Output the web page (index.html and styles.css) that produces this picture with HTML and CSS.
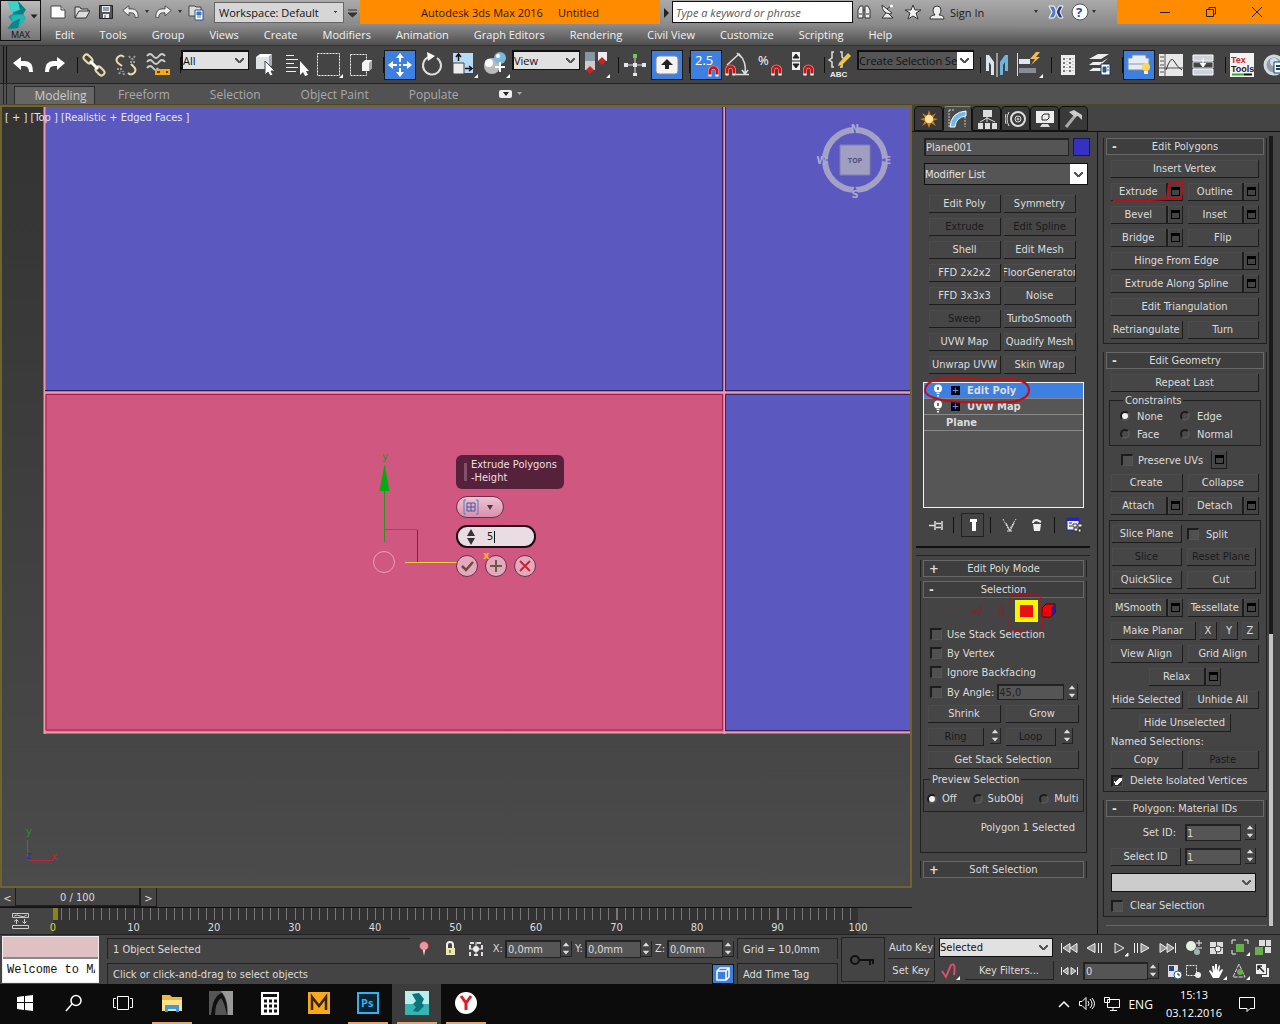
FILE: index.html
```html
<!DOCTYPE html>
<html lang="en">

<head>
    <meta charset="UTF-8">
    <meta name="viewport" content="width=device-width, initial-scale=1.0">
    <title>Autodesk 3ds Max 2016 - Untitled</title>
    <link rel="stylesheet" href="styles.css">
</head>

<body>
    <!-- shared icons -->
    <svg class="defs" width="0" height="0">
        <symbol id="spin" viewBox="0 0 9 14"><path d="M4.5 1.5 7.5 5h-6zM4.5 12.5 7.5 9h-6z" fill="#ddd"/></symbol>
        <symbol id="magnet" viewBox="0 0 11 12"><path d="M2 11V6a3.5 3.5 0 0 1 7 0v5" fill="none" stroke="#e88" stroke-width="4"/><path d="M2 11V6a3.5 3.5 0 0 1 7 0v5" fill="none" stroke="#c11" stroke-width="2.5"/><path d="M.5 9.5h3v2h-3zM7.5 9.5h3v2h-3z" fill="#fff"/></symbol>
        <symbol id="undo" viewBox="0 0 22 18"><path d="M1 7 9 1v4h4q8 0 8 11h-4q0-6-5-6H9v4z"/></symbol>
        <symbol id="bulb" viewBox="0 0 10 13"><circle cx="5" cy="4.5" r="4" fill="#fff"/><path d="M3.5 9h3v1h-3zM4 11h2v1.5H4z" fill="#fff"/><path d="M4 3h2v3H4z" fill="#777"/></symbol>
    </svg>

    <header class="top">
        <button class="logo">
            <svg width="34" height="30" viewBox="0 0 34 30"><path d="M3 1 14 0l8 9-3 4 3 5-8 10-11 1 5-7-4-6 5-3z" fill="#139a9c"/><path d="M3 1 14 0l2 9-9 3z" fill="#3fd0cc"/><path d="M14 0l8 9-3 5-10-1 7-4z" fill="#0b7f86"/><path d="m7 15 12-1 3 4-8 10-6-5z" fill="#25b5b3"/><path d="m8 22 8-4-2 10-11 1z" fill="#0c868c"/><path d="M27 14h7l-3.500 4z" fill="#222"/></svg>
            <span>MAX</span>
        </button>
        <div class="bars">
            <div class="titlebar">
                <div class="quick">
                    <svg width="16" height="16"><path d="M1 2h10l4 4v8H1z" fill="#fff" stroke="#444"/><path d="M11 2v4h4" fill="#ccc" stroke="#444"/></svg>
                    <svg width="16" height="16"><path d="M1 14V3h5l1 2h7v2M1 14 5 7h11l-4 7z" fill="#ddd" stroke="#333"/></svg>
                    <svg width="16" height="16"><path d="M1.500 1.500h13v13h-13z" fill="#555" stroke="#222"/><path d="M4 2h8v6H4zM5 10h6v4H5z" fill="#e6edf5"/><path d="M5 4h6M5 6h6M7 11v3" stroke="#456"/></svg>
                    <svg class="pale" width="17" height="14"><use href="#undo"/></svg>
                    <i class="dot"></i>
                    <svg class="pale flip" width="17" height="14"><use href="#undo"/></svg>
                    <i class="dot"></i>
                    <svg width="17" height="17"><path d="M1 2h6l1 1h5v9H1z" fill="#ddd" stroke="#444"/><path d="M7 6h8v10H7z" fill="#fff" stroke="#27558f"/><path d="M9 8h4v3H9zM9 13h4" fill="#3877bd" stroke="#3877bd"/></svg>
                    <select class="workspace" aria-label="Workspace"><option>Workspace: Default</option></select>
                    <svg class="more" width="16" height="22"><path d="M4 9h9M4 12h9l-4.500 4z" stroke="#333" fill="#333"/></svg>
                </div>
                <div class="caption"><span>Autodesk 3ds Max 2016</span><span>Untitled</span></div>
                <div class="search">
                    <svg width="12" height="22"><path d="m4 7 5 5-5 5z" fill="#222"/></svg>
                    <input type="text" placeholder="Type a keyword or phrase" aria-label="Search">
                    <svg width="24" height="20"><path d="M5 16V8l2-4h3v12zM12 16V4h3l2 4v8zM10 8h2" fill="#eee" stroke="#333"/><path d="M6 12h3M13 12h3" stroke="#333"/></svg>
                    <svg width="24" height="20"><path d="M5 3q0 8 8 9l2-1zM9 11l-4 5h11l-4-4" fill="#eee" stroke="#333"/><path d="m10 7 4-3" stroke="#333"/><circle cx="14.500" cy="4" r="1.500" fill="#fff"/></svg>
                    <svg width="24" height="20"><path d="m12 3 2 5h6l-5 3 2 6-5-3-5 3 2-6-5-3h6z" fill="#f3f3f3" stroke="#333"/></svg>
                    <svg width="24" height="20"><path d="M5 17q0-4 5-4-2-2-2-5 0-4 4-4t4 4q0 3-2 5 5 0 5 4z" fill="#eee" stroke="#333"/></svg>
                    <a class="signin" href="#">Sign In</a>
                    <i class="dot"></i>
                    <svg class="exch" width="20" height="20"><path d="M3 4h5l2 4v4l-2 4H3l3-6z" fill="#5a7bc4" stroke="#fff"/><path d="M17 4h-4l-3 6 3 6h4l-3-6z" fill="#203c85" stroke="#fff"/></svg>
                    <svg width="26" height="20"><circle cx="14" cy="10" r="8" fill="#fff" stroke="#555"/><text x="10" y="15" class="help">?</text></svg>
                    <i class="dot"></i>
                </div>
                <div class="winbtns">
                    <button aria-label="Minimize"><svg width="12" height="12"><path d="M1 6.500h10" stroke="#222"/></svg></button>
                    <button aria-label="Restore"><svg width="12" height="12"><path d="M1.500 3.500h7v7h-7zM4 3V1.500h6.500V8H9" fill="none" stroke="#222"/></svg></button>
                    <button aria-label="Close"><svg width="12" height="12"><path d="m1 1 10 10M11 1 1 11" stroke="#222"/></svg></button>
                </div>
            </div>
            <nav class="menubar">
                <a href="#">Edit</a><a href="#">Tools</a><a href="#">Group</a><a href="#">Views</a><a href="#">Create</a><a href="#">Modifiers</a><a href="#">Animation</a><a href="#">Graph Editors</a><a href="#">Rendering</a><a href="#">Civil View</a><a href="#">Customize</a><a href="#">Scripting</a><a href="#">Help</a>
            </nav>
        </div>
    </header>

    <div class="toolbar">
        <button aria-label="Undo"><svg width="22" height="18" fill="#fff"><use href="#undo"/></svg></button>
        <button aria-label="Redo"><svg class="flip" width="22" height="18" fill="#fff"><use href="#undo"/></svg></button>
        <i class="sep"></i>
        <button aria-label="Link"><svg width="24" height="24" fill="none" stroke="#e8dcae" stroke-width="2"><rect x="1" y="3" width="10" height="6" rx="3" transform="rotate(45 6 6)"/><rect x="13" y="15" width="10" height="6" rx="3" transform="rotate(45 18 18)"/><path d="m8 8 8 8" stroke="#fff" stroke-width="3"/></svg></button>
        <button aria-label="Unlink"><svg width="24" height="24" fill="none" stroke="#e8dcae" stroke-width="2"><path d="M10 4Q7 1 4 4t0 6l4 3M14 20q3 3 6 0t0-6l-3-3"/><path d="m15 3 2 3M21 3l-3 4M16 9h6M3 16h5M5 21l2-3M10 22l-1-4" stroke="#999" stroke-dasharray="2 1"/></svg></button>
        <button aria-label="Bind"><svg width="26" height="26" fill="none"><path d="M2 4q3-4 6 0t6 0 6 0M2 10q3-4 6 0t6 0 6 0M2 16q3-4 6 0t5 0" stroke="#ccc" stroke-width="2"/><path d="M11 18h6v4h-6zM18 18h6v4h-6zM15 20h6" stroke="#f2ab16" stroke-width="2"/></svg></button>
        <i class="sep"></i>
        <select class="filter" aria-label="Selection filter"><option>All</option></select>
        <button aria-label="Select"><svg width="22" height="24"><path d="m2 4 4-3h12l-3 3z" fill="#fff"/><path d="M2 4h13v12H2z" fill="#dfe3e6"/><path d="m18 1-3 3v12l3-4z" fill="#aab"/><path d="M11 8v14l3-3 2 4 3-1-2-4h4z" fill="#fff" stroke="#444" stroke-width="1"/></svg></button>
        <button aria-label="Select by Name"><svg width="26" height="24"><path d="M2 2.500h8M2 6.500h12M2 10.500h8M2 14.500h12M2 18.500h10" stroke="#eee"/><path d="M16 8v14l3-3 2 4 3-1-2-4h3z" fill="#fff"/></svg></button>
        <button aria-label="Region"><svg width="28" height="28"><path d="M2.500 2.500h22v22h-22z" fill="none" stroke="#fff" stroke-dasharray="2 1"/><path d="m28 23v4h-4z" fill="#fff"/></svg></button>
        <button aria-label="Window crossing"><svg width="26" height="26"><path d="M2.500 2.500h16v21h-16z" fill="none" stroke="#fff" stroke-dasharray="2 1"/><path d="m14 11 3-3h7v8l-3 3h-7z" fill="#f4f4f4"/><path d="M21 11v8l3-3V8z" fill="#aaa"/></svg></button>
        <i class="sep"></i>
        <button class="on" aria-label="Move"><svg width="24" height="24" fill="#fff"><path d="m12 0 4 5h-3v4h-2V5H8zM12 24l4-5h-3v-4h-2v4H8zM0 12l5-4v3h4v2H5v3zM24 12l-5-4v3h-4v2h4v3z"/><path d="M11 11h2v2h-2z"/></svg></button>
        <button aria-label="Rotate"><svg width="24" height="26"><path d="M9 5a9 9 0 1 0 8 1" fill="none" stroke="#ddd" stroke-width="2"/><path d="m7 0 8 4-7 5z" fill="#fff"/></svg></button>
        <button aria-label="Scale"><svg width="28" height="28"><path d="M3 2h20v20H3z" fill="#b5dcf4"/><path d="M3 12h11v11H3z" fill="#eee" stroke="#444"/><path d="M8.500 10V4M6 6l2.500-3L11 6M15 17.500h7M19 15l3 2.500-3 2.500" fill="none" stroke="#111" stroke-width="1.500"/><path d="M28 23v4h-4z" fill="#fff"/></svg></button>
        <button aria-label="Place"><svg width="28" height="28"><circle cx="10" cy="15" r="8" fill="#bbb"/><circle cx="7" cy="12" r="4" fill="#fff"/><circle cx="18" cy="7" r="6" fill="#7db8dc"/><circle cx="16" cy="5" r="2" fill="#fff"/><path d="M18 11v10M13 16h10" stroke="#fff" stroke-width="2"/><path d="M28 23v4h-4z" fill="#fff"/></svg></button>
        <select class="filter" aria-label="Reference coordinate system"><option>View</option></select>
        <button aria-label="Pivot"><svg width="28" height="28"><path d="M3 1h10v18H3z" fill="#8797a2"/><path d="M3 10h10v9H3z" fill="#ccc"/><path d="M16 1h9v9h-9z" fill="#eee"/><path d="m8 15 4 4-4 4-4-4zM20 6l4 4-4 4-4-4z" fill="#c22"/><path d="M28 23v4h-4z" fill="#fff"/></svg></button>
        <i class="sep"></i>
        <button aria-label="Manipulate"><svg width="24" height="24"><path d="M12 2v20M2 12h20" stroke="#ddd"/><path d="M10 20h4v3h-4zM1 10h4v4H1zM19 10h4v4h-4zM10 10h4v4h-4z" fill="#dde8f0"/><path d="M10 1h4v4h-4z" fill="#6c5"/></svg></button>
        <button class="on" aria-label="Keyboard override"><svg width="24" height="20"><rect x="1" y="1" width="22" height="18" rx="3" fill="#f3f3f3" stroke="#888"/><path d="m12 4 6 6h-4v4h-4v-4H6z" fill="#222"/></svg></button>
        <i class="sep"></i>
        <button class="on" aria-label="Snaps"><svg width="28" height="28"><text x="3" y="14" class="snap">2.5</text><use href="#magnet" x="16" y="14" width="11" height="12"/></svg></button>
        <button aria-label="Angle Snap"><svg width="28" height="28"><path d="M3 14 15 3q8 8 6 20M12 23.500h13M18 19l3 4 3-4M13 2l4 4" fill="none" stroke="#ddd" stroke-width="1.500"/><use href="#magnet" x="1" y="13" width="11" height="12"/></svg></button>
        <button aria-label="Percent Snap"><svg width="28" height="28"><text x="2" y="14" class="snap">%</text><use href="#magnet" x="15" y="13" width="11" height="12"/></svg></button>
        <button aria-label="Spinner Snap"><svg width="28" height="28"><path d="M4 1h8v18H4z" fill="#eee"/><path d="m8 3 3 4H5zM8 17l3-4H5zM4 10h8" fill="#222" stroke="#222"/><use href="#magnet" x="15" y="13" width="11" height="12"/></svg></button>
        <i class="sep"></i>
        <button aria-label="Edit Named Selection Sets"><svg width="28" height="28"><path d="M7 1H5v6l-3 2 3 2v5h2M13 1h2v5l2 2M13 16h2v-3" fill="none" stroke="#ddd" stroke-width="1.500"/><path d="m12 12 9-10 3 3-9 9-4 1z" fill="#f4c73c"/><text x="3" y="26" class="abc">ABC</text></svg></button>
        <select class="sets" aria-label="Named selection sets"><option>Create Selection Se</option></select>
        <i class="sep"></i>
        <button aria-label="Mirror"><svg width="26" height="26"><path d="M2 3h3l5 7v13H7V13l-2-3v9H2z" fill="#dde5ea"/><path d="M24 3h-3l-5 7v13h3V13l2-3v9h3z" fill="#6db3df"/><path d="M13 1v24" stroke="#eee"/></svg></button>
        <button aria-label="Align"><svg width="28" height="28"><path d="M2.500 2v23" stroke="#ddd"/><path d="M4 8h11v5H4z" fill="#dce7f2"/><path d="M4 17h17v5H4z" fill="#888c98"/><path d="m21 1-6 7h5l-4 6 9-8h-4l4-5z" fill="#f4bb50"/><path d="M28 23v4h-4z" fill="#fff"/></svg></button>
        <i class="sep"></i>
        <button aria-label="Scene Explorer"><svg width="18" height="24"><path d="M2 2h14v20H2z" fill="#eee"/><path d="M5 5v15M11 5v15" stroke="#777" stroke-width="2" stroke-dasharray="2 2"/><path d="M8 5v15M14 5v15" stroke="#999" stroke-dasharray="1 2"/></svg></button>
        <button aria-label="Layer Explorer"><svg width="26" height="26"><path d="m2 7 9-5h11l-8 5zM2 13l4-3h9l6-4-7 7zM2 19l4-3h9l6-4-7 7z" fill="#eee"/><path d="M14 12h9v11h-9z" fill="#fff" stroke="#16355c"/><path d="M16 15h3v5h-3zM20 15h2M20 18h2" fill="#23578c" stroke="#23578c"/></svg></button>
        <i class="sep"></i>
        <button class="on" aria-label="Toggle Ribbon"><svg width="26" height="26"><path d="M2 6h4V3h14v3h3v12H2z" fill="#e4ebf5" stroke="#888"/><path d="M2 12h21" stroke="#89a"/><circle cx="20" cy="15" r="4" fill="#ffd65a"/><path d="M18 19h4v3h-4z" fill="#eee"/></svg></button>
        <button aria-label="Curve Editor"><svg width="26" height="26"><path d="M1 2h24v22H1z" fill="#e8e8e8"/><path d="M7 2v22M1 16h24M2 5h4M2 9h4M2 13h4M2 20h4" stroke="#555"/><path d="M8 18q5-15 8-9t8 9" fill="none" stroke="#333"/></svg></button>
        <button aria-label="Schematic View"><svg width="24" height="26"><path d="M2 3h20v6H2zM2 17h20v6H2z" fill="#ccd3db" stroke="#fff"/><path d="M2 10h20v6H2z" fill="#444" stroke="#ddd"/><path d="M12 6v8M9 11l3 4 3-4" fill="#fff" stroke="#fff"/></svg></button>
        <i class="sep"></i>
        <button aria-label="TexTools"><svg width="26" height="26"><path d="M1 1h24v24H1z" fill="#f3f3f3"/><text x="2" y="11" class="tex red">Tex</text><text x="2" y="20" class="tex">Tools</text><path d="M3 22.500h12" stroke="#3a3" stroke-width="2"/><path d="M15 22.500h8" stroke="#111" stroke-width="2"/></svg></button>
        <button aria-label="Render Setup"><svg width="26" height="26"><circle cx="13" cy="13" r="9" fill="#99a" stroke="#cdd" stroke-width="3"/><circle cx="13" cy="10" r="4" fill="#cde"/><path d="M13 10h12v11H13z" fill="#fff" stroke="#146"/><path d="M15 14h8M15 17h8" stroke="#146" stroke-width="2"/></svg></button>
    </div>

    <div class="ribbon">
        <button class="current">Modeling</button><button>Freeform</button><button>Selection</button><button>Object Paint</button><button>Populate</button>
        <svg width="24" height="12"><rect x="0" y="2" width="13" height="8" rx="2" fill="#eee"/><path d="M4 4h6L7 8z" fill="#222"/><path d="M18 4h5l-2.500 3z" fill="#aaa"/></svg>
    </div>

    <main class="work">
        <div class="left">
            <div class="viewport">
                <svg class="scene" viewBox="1 1 908 780" preserveAspectRatio="xMinYMin slice">
                    <path d="M43 0h900v627H43z" fill="#5b58bf"/>
                    <path d="M43 287h680v340H43z" fill="#d0577f"/>
                    <path d="M43 286.500h900M723.500 0v628M43 626.500h900M43.500 0v628" stroke="#ee9aae" stroke-width="2" fill="none"/>
                    <path d="M44 284.500h678M724 284.500h200" stroke="#222060"/>
                    <path d="M721.500 0v284M724.500 0v284M724.500 289v335M724 288.500h200M724 624.500h200" stroke="#33266c" fill="none"/>
                    <path d="M45 288.500h676.500v335.500H45z" fill="none" stroke="#a02050"/>
                    <g fill="none">
                        <path d="M383.500 436v-54M383.500 423.500h33" stroke="#2f8f22"/>
                        <path d="M416.500 424v33" stroke="#d00020"/>
                        <path d="M404 456.500h70" stroke="#ffd23a"/>
                        <circle cx="383" cy="456" r="10.500" stroke="#e7a3b8"/>
                    </g>
                    <path d="m383.500 358 5 27h-10z" fill="#00ac12"/>
                    <text x="381" y="354" class="axis green">y</text>
                    <path d="M26.500 754v-20" stroke="#3b7a3e"/>
                    <path d="M28 754.500h24" stroke="#b52a35"/>
                    <text x="25" y="729" class="axis green">y</text>
                    <text x="25" y="753" class="axis blue">z</text>
                    <text x="50" y="754" class="axis red">x</text>
                </svg>
                <div class="vlabel">[ + ] [Top ] [Realistic + Edged Faces ]</div>
                <svg class="cube" width="80" height="80" viewBox="0 0 80 80">
                    <circle cx="40" cy="40" r="30" fill="none" stroke="#a3a2c6" stroke-width="6"/>
                    <path d="M37 7h6l-3 7zM37 73h6l-3-7zM7 37v6l7-3zM73 37v6l-7-3z" fill="#5b58bf"/>
                    <path d="M25 25h30v30H25z" fill="#a09fc2" stroke="#8280b4"/>
                    <text x="40" y="43" class="top-face">TOP</text>
                    <text x="40" y="12">N</text><text x="40" y="78">S</text><text x="7" y="44">W</text><text x="73" y="44">E</text>
                </svg>
                <div class="caddy">
                    <div class="caddy-title"><i></i><span>Extrude Polygons<br>-Height</span></div>
                    <button class="pill"><svg width="36" height="16"><path d="M3 1H1v14h2M13 1h2v14h-2" fill="none" stroke="#5577cc"/><path d="M4 4h8v8H4zM8 4v8M4 8h8" fill="none" stroke="#4557a8"/><path d="M24 6h6l-3 5z" fill="#553344"/></svg></button>
                    <div class="field"><svg width="10" height="16"><path d="m5 0 4 7H1zM5 16l4-7H1z" fill="#333"/></svg><input type="text" value="5" aria-label="Height"><i class="caret"></i></div>
                    <div class="rounds">
                        <button aria-label="OK"><svg width="16" height="16"><path d="m3 8 4 4 7-8" fill="none" stroke="#6a4b38" stroke-width="2.500"/></svg></button>
                        <button aria-label="Apply"><svg width="16" height="16"><path d="M8 2v12M2 8h12" stroke="#6a5a4a" stroke-width="2"/></svg></button>
                        <button aria-label="Cancel"><svg width="16" height="16"><path d="m3 3 10 10M13 3 3 13" stroke="#cc2238" stroke-width="2"/></svg></button>
                        <b>x</b>
                    </div>
                </div>
            </div>
            <div class="slider"><button>&lt;</button><button class="handle">0 / 100</button><button>&gt;</button></div>
            <div class="track">
                <svg width="18" height="18" fill="none" stroke="#ccc"><path d="M.5 1.500h16v4H.5zM.5 13.500h16v3H.5zM2 4q3-2 6 0t7-1M4.500 12V7.500L2 9.500M4.500 7.500l2 2M12.500 7v4.500l-2-2M12.500 11.500l2-2"/></svg>
                <div class="ruler">
                    <div class="ticks"></div>
                    <div class="nums"><span>0</span><span>10</span><span>20</span><span>30</span><span>40</span><span>50</span><span>60</span><span>70</span><span>80</span><span>90</span><span>100</span></div>
                </div>
            </div>
        </div>

        <aside class="side">
            <div class="tabs">
                <button aria-label="Create"><svg width="20" height="20"><path d="m10 1 2 6 5-3-3 5 5 1-5 2 3 5-5-3-2 5-2-5-5 3 3-5-5-2 5-1-3-5 5 3z" fill="#c98224"/><circle cx="10" cy="10" r="4" fill="#ffe29a"/></svg></button>
                <button class="current" aria-label="Modify"><svg width="20" height="20"><path d="M2 18Q3 3 18 2v5Q8 8 7 18z" fill="#6fb9ec" stroke="#fff"/><path d="M1 1v18M1 1h5M17 8v10" stroke="#ccc" stroke-dasharray="2 1"/></svg></button>
                <button aria-label="Hierarchy"><svg width="20" height="20" fill="#ddd"><path d="M6 1h9v7H6zM9.500 8h1v5h-1zM1 14h5v6H1zM8 14h5v6H8zM15 14h5v6h-5z"/><path d="m3 13 7-4 8 4" fill="none" stroke="#ddd"/></svg></button>
                <button aria-label="Motion"><svg width="22" height="20" fill="none" stroke="#ddd"><circle cx="13" cy="10" r="7" stroke-width="2"/><circle cx="13" cy="10" r="3"/><circle cx="13" cy="10" r="1"/><path d="M4 3q-4 7 0 14M1 5q-2 5 0 10"/></svg></button>
                <button aria-label="Display"><svg width="20" height="20"><path d="M1 2h18v12H1z" fill="#eee"/><path d="M7 7l2-2h5v4l-2 2H7z" fill="none" stroke="#222"/><path d="M7 15h6l2 3H5z" fill="#ddd"/></svg></button>
                <button aria-label="Utilities"><svg width="20" height="20"><path d="m2 18 9-11" stroke="#aaa" stroke-width="3"/><path d="m5 3 5-2 8 5v5l-4-4-3 1z" fill="#ccc"/></svg></button>
            </div>
            <div class="cols">
                <div class="modify">
                    <div class="namerow"><input type="text" value="Plane001" aria-label="Object name"><button class="swatch" aria-label="Object colour"></button></div>
                    <select class="modlist" aria-label="Modifier List"><option>Modifier List</option></select>
                    <div class="modbtns">
                        <button>Edit Poly</button><button>Symmetry</button>
                        <button disabled>Extrude</button><button disabled>Edit Spline</button>
                        <button>Shell</button><button>Edit Mesh</button>
                        <button>FFD 2x2x2</button><button>FloorGenerator</button>
                        <button>FFD 3x3x3</button><button>Noise</button>
                        <button disabled>Sweep</button><button>TurboSmooth</button>
                        <button>UVW Map</button><button>Quadify Mesh</button>
                        <button>Unwrap UVW</button><button>Skin Wrap</button>
                    </div>
                    <ul class="stack">
                        <li class="active"><svg width="10" height="13"><use href="#bulb"/></svg><i>+</i>Edit Poly</li>
                        <li><svg width="10" height="13"><use href="#bulb"/></svg><i>+</i>UVW Map</li>
                        <li class="base">Plane</li>
                    </ul>
                    <svg class="mark-stack" width="112" height="32" viewBox="0 0 112 32"><path d="M14 6Q30 1 60 6l30-1q17 2 17 11 0 9-17 12-35 2-65-1Q2 23 3 16 4 8 14 6z" fill="none" stroke="#c00d18" stroke-width="2"/></svg>
                    <div class="stacktools">
                        <button aria-label="Pin stack"><svg width="16" height="14"><path d="M1 7.500h6M7 3v9M8 5.500h5M8 9.500h5M14 3v9" stroke="#ddd" stroke-width="1.500"/></svg></button>
                        <i class="sep"></i>
                        <button class="pressed" aria-label="Show end result"><svg width="10" height="14"><path d="M2 1h7v3H8v9H4V4H2z" fill="#fff"/></svg></button>
                        <i class="sep"></i>
                        <button aria-label="Make unique"><svg width="16" height="16" fill="none" stroke="#ddd"><path d="m1 2 6 11L14 2" stroke-dasharray="2 1"/><path d="m4 6 4 8 4-8M5 14h5"/></svg></button>
                        <button aria-label="Remove modifier"><svg width="12" height="14"><path d="M2 6h8l-1 7H3z" fill="#eee"/><path d="M2 5q0-3 4-3l4 2" stroke="#eee" fill="none" stroke-width="2"/></svg></button>
                        <i class="sep"></i>
                        <button aria-label="Configure sets"><svg width="16" height="16"><path d="M1 1h12v12H1z" fill="#eee" stroke="#22c"/><path d="M1 1h12v3H1z" fill="#22c"/><path d="M3 6h3M3 9h3" stroke="#333"/><path d="M7 7h4v3H7zM12 7h4v3h-4zM8 11h4v3H8zM12 12h3v3h-3z" fill="#fff" stroke="#333" stroke-width="1"/></svg></button>
                    </div>
                    <div class="rolls">
                        <section class="roll closed"><button class="rt"><b>+</b>Edit Poly Mode</button></section>
                        <section class="roll sel">
                            <button class="rt"><b>-</b>Selection</button>
                            <div class="rb">
                                <div class="sub">
                                    <svg width="20" height="20"><path d="m3 6 5 8 6-7" fill="none" stroke="#8c2029" stroke-dasharray="2 3"/></svg>
                                    <svg width="20" height="20"><path d="m3 12 12-7-3 10-3-4-4 2" fill="none" stroke="#8c2029"/></svg>
                                    <svg width="20" height="20"><path d="m5 4 4 3v6l-4 3M10 4q4 4 1 12" fill="none" stroke="#8c2029"/></svg>
                                    <button aria-label="Polygon"></button>
                                    <svg width="18" height="20"><path d="m2 7 4-4h9v9l-4 4H2z" fill="#f00" stroke="#400"/><path d="m11 7 4-4v9l-4 4z" fill="#2a1f8a"/></svg>
                                    <svg class="mark-poly" width="44" height="44" viewBox="0 0 44 44"><path d="M4 4 30 3l5 2v18l8-2-6 3-1 14-32 2-1-5z" fill="none" stroke="#c00d18"/></svg>
                                </div>
                                <label><input type="checkbox">Use Stack Selection</label>
                                <label><input type="checkbox">By Vertex</label>
                                <label><input type="checkbox">Ignore Backfacing</label>
                                <div class="angle"><label><input type="checkbox">By Angle:</label><input type="text" value="45,0" aria-label="Angle" disabled><svg class="spin" width="11" height="16"><use href="#spin"/></svg></div>
                                <div class="pair"><button>Shrink</button><button>Grow</button></div>
                                <div class="pair loops"><div class="split"><button disabled>Ring</button><svg class="spin" width="11" height="16"><use href="#spin"/></svg></div><div class="split"><button disabled>Loop</button><svg class="spin" width="11" height="16"><use href="#spin"/></svg></div></div>
                                <button>Get Stack Selection</button>
                                <fieldset class="preview">
                                    <legend>Preview Selection</legend>
                                    <label><input type="radio" name="pv" checked>Off</label>
                                    <label><input type="radio" name="pv">SubObj</label>
                                    <label><input type="radio" name="pv">Multi</label>
                                </fieldset>
                                <p class="count">Polygon 1 Selected</p>
                            </div>
                        </section>
                        <section class="roll closed"><button class="rt"><b>+</b>Soft Selection</button></section>
                    </div>
                </div>

                <div class="params">
                    <section class="roll">
                        <button class="rt"><b>-</b>Edit Polygons</button>
                        <div class="rb">
                            <button>Insert Vertex</button>
                            <div class="pair">
                                <div class="split"><button>Extrude</button><button class="opt" aria-label="Extrude settings"></button><svg class="mark-ext" width="76" height="24" viewBox="0 0 76 24"><path d="M2 20q30 1 54-1h14q2-9 1-17L58 4l-2 14" fill="none" stroke="#c00d18" stroke-width="2"/></svg></div>
                                <div class="split"><button>Outline</button><button class="opt" aria-label="Outline settings"></button></div>
                            </div>
                            <div class="pair">
                                <div class="split"><button>Bevel</button><button class="opt" aria-label="Bevel settings"></button></div>
                                <div class="split"><button>Inset</button><button class="opt" aria-label="Inset settings"></button></div>
                            </div>
                            <div class="pair">
                                <div class="split"><button>Bridge</button><button class="opt" aria-label="Bridge settings"></button></div>
                                <button>Flip</button>
                            </div>
                            <div class="split"><button>Hinge From Edge</button><button class="opt" aria-label="Hinge settings"></button></div>
                            <div class="split"><button>Extrude Along Spline</button><button class="opt" aria-label="Spline settings"></button></div>
                            <button>Edit Triangulation</button>
                            <div class="pair"><button>Retriangulate</button><button>Turn</button></div>
                        </div>
                    </section>
                    <section class="roll">
                        <button class="rt"><b>-</b>Edit Geometry</button>
                        <div class="rb">
                            <button>Repeat Last</button>
                            <fieldset class="constraints">
                                <legend>Constraints</legend>
                                <label><input type="radio" name="cn" checked>None</label>
                                <label><input type="radio" name="cn">Edge</label>
                                <label><input type="radio" name="cn">Face</label>
                                <label><input type="radio" name="cn">Normal</label>
                            </fieldset>
                            <div class="uvs"><label><input type="checkbox">Preserve UVs</label><button class="opt" aria-label="Preserve UVs settings"></button></div>
                            <div class="pair"><button>Create</button><button>Collapse</button></div>
                            <div class="pair">
                                <div class="split"><button>Attach</button><button class="opt" aria-label="Attach list"></button></div>
                                <div class="split"><button>Detach</button><button class="opt" aria-label="Detach settings"></button></div>
                            </div>
                            <div class="slices">
                                <button>Slice Plane</button><label><input type="checkbox">Split</label>
                                <button disabled>Slice</button><button disabled>Reset Plane</button>
                                <button>QuickSlice</button><button>Cut</button>
                            </div>
                            <div class="pair">
                                <div class="split"><button>MSmooth</button><button class="opt" aria-label="MSmooth settings"></button></div>
                                <div class="split"><button>Tessellate</button><button class="opt" aria-label="Tessellate settings"></button></div>
                            </div>
                            <div class="planar"><button>Make Planar</button><button>X</button><button>Y</button><button>Z</button></div>
                            <div class="pair"><button>View Align</button><button>Grid Align</button></div>
                            <div class="split relax"><button>Relax</button><button class="opt" aria-label="Relax settings"></button></div>
                            <div class="pair"><button>Hide Selected</button><button>Unhide All</button></div>
                            <button class="unsel">Hide Unselected</button>
                            <p class="named">Named Selections:</p>
                            <div class="pair"><button>Copy</button><button disabled>Paste</button></div>
                            <label><input type="checkbox" checked>Delete Isolated Vertices</label>
                        </div>
                    </section>
                    <section class="roll">
                        <button class="rt"><b>-</b>Polygon: Material IDs</button>
                        <div class="rb ids">
                            <label class="setid" for="setid">Set ID:</label><input id="setid" type="text" value="1"><svg class="spin" width="11" height="16"><use href="#spin"/></svg>
                            <button>Select ID</button><input type="text" value="1" aria-label="Select ID"><svg class="spin" width="11" height="16"><use href="#spin"/></svg>
                            <select class="matlist" aria-label="Material" disabled><option></option></select>
                            <label class="wide"><input type="checkbox">Clear Selection</label>
                        </div>
                    </section>
                </div>
                <div class="scroll"><i></i></div>
            </div>
        </aside>
    </main>

    <footer class="status">
        <div class="listener"><div></div><input type="text" value="Welcome to MAXScript" aria-label="MAXScript mini listener"></div>
        <div class="info">
            <div class="line">
                <span class="msg">1 Object Selected</span>
                <svg width="28" height="20"><circle cx="14" cy="7" r="4.500" fill="#e89aa6" stroke="#b33"/><path d="M13 11h2l-1 6z" fill="#fff"/></svg>
                <svg width="24" height="20"><path d="M9 9V6q0-3 3-3t3 3v3" fill="none" stroke="#eee" stroke-width="2"/><path d="M8 9h9v7H8z" fill="#eee6b0"/><path d="M12 11v3" stroke="#333"/></svg>
                <svg width="28" height="20"><path d="M8 4h12v12H8z" fill="none" stroke="#ddd" stroke-width="2" stroke-dasharray="4 3"/><circle cx="14" cy="10" r="3" fill="#eee"/><path d="M14 3v4M14 13v4M7 10h4M17 10h4" stroke="#eee"/></svg>
                <label>X: <input type="text" value="0,0mm"></label><svg class="spin" width="11" height="16"><use href="#spin"/></svg>
                <label>Y: <input type="text" value="0,0mm"></label><svg class="spin" width="11" height="16"><use href="#spin"/></svg>
                <label>Z: <input type="text" value="0,0mm"></label><svg class="spin" width="11" height="16"><use href="#spin"/></svg>
                <span class="grid">Grid = 10,0mm</span>
            </div>
            <div class="line">
                <span class="prompt">Click or click-and-drag to select objects</span>
                <button class="degrade" aria-label="Adaptive degradation"><svg width="16" height="16"><path d="m2 5 3-3h9v9l-3 3H2zM2 5h9v9M11 5l3-3" fill="#3a7fe0" stroke="#fff" stroke-width="1.500"/></svg></button>
                <span class="grid">Add Time Tag</span>
            </div>
        </div>
        <button class="bigkey" aria-label="Set Keys"><svg width="28" height="16"><circle cx="6" cy="8" r="4" fill="none" stroke="#111" stroke-width="2"/><path d="M10 8h15M21 8v5M24 8v4" stroke="#111" stroke-width="2"/></svg></button>
        <div class="keys"><button>Auto Key</button><button>Set Key</button></div>
        <div class="filters">
            <select aria-label="Key selection"><option>Selected</option></select>
            <div><svg width="24" height="20"><path d="m3 10 4 6 5-12q5-3 3 10" fill="none" stroke="#d6506a" stroke-width="2"/><path d="M21 15v4h-4z" fill="#fff"/></svg><button>Key Filters...</button></div>
        </div>
        <div class="play">
            <div class="line">
                <svg width="28" height="20" fill="#999" stroke="#eee"><path d="M5.500 5v10M14 5.500v9L7 10zM21 5.500v9L14 10z"/></svg>
                <svg width="24" height="20" fill="#999" stroke="#eee"><path d="M11 5.500v9L3 10zM14.500 5v10M17.500 5v10"/></svg>
                <svg width="22" height="20" fill="#555" stroke="#eee"><path d="m7 5 9 5-9 5z"/><path d="M20 15v3h-3z" fill="#fff"/></svg>
                <svg width="24" height="20" fill="#999" stroke="#eee"><path d="M4.500 5v10M7.500 5v10M11 5.500v9l8-4.500z"/></svg>
                <svg width="26" height="20" fill="#999" stroke="#eee"><path d="M6 5.500v9l7-4.500zM13 5.500v9l7-4.500zM21.500 5v10"/></svg>
            </div>
            <div class="line">
                <svg width="24" height="20" fill="#999" stroke="#eee"><path d="M5.500 6v8M12 6.500v7L7 10zM15 6.500v7l5-3.500zM21.500 6v8"/></svg>
                <input type="text" value="0" aria-label="Current frame"><svg class="spin" width="11" height="16"><use href="#spin"/></svg>
            </div>
        </div>
        <div class="nav">
            <svg width="20" height="20"><circle cx="7" cy="8" r="5" fill="#e4f0e4"/><circle cx="13" cy="14" r="3" fill="#9bb5b0"/><path d="M12 5h6M15 2v6M12 10h6" stroke="#eee"/></svg>
            <svg width="20" height="20"><path d="M3 4h6v5H3zM10 4h6v5h-6zM3 10h6v6H3zM10 10h6v6h-6z" fill="#ddd"/><circle cx="11" cy="11" r="3" fill="#eee" stroke="#444"/></svg>
            <svg width="20" height="20"><path d="M2 6V2h4M14 2h4v4M2 12v4h4" fill="none" stroke="#eee"/><path d="M6 6h8v8H6z" fill="#69b04c"/><path d="M20 14v4h-4z" fill="#fff"/></svg>
            <svg width="20" height="20"><path d="M6 2h6v6H6zM13 2h5v6h-5zM12 9h6v6h-6z" fill="#ddd"/><path d="M2 9h8v8H2z" fill="#69b04c"/></svg>
            <svg width="20" height="20"><path d="M2 3h10v12H2z" fill="#dde"/><path d="M3 4h5v5H3z" fill="#247"/><circle cx="12" cy="13" r="4" fill="#fff" stroke="#258"/><path d="M12 11v2h2" stroke="#222" fill="none"/></svg>
            <svg width="20" height="20"><path d="M2.500 3.500h10v10h-10z" fill="none" stroke="#eee" stroke-dasharray="2 1"/><circle cx="14" cy="13" r="3" fill="#eee"/></svg>
            <svg width="20" height="20"><path d="M6 16 2 9l1-1 3 3-1-7h2l1 5V2h2v7l2-6 1 1-1 6 3-3 1 1-4 8z" fill="#fff"/><path d="M20 14v4h-4z" fill="#fff"/></svg>
            <svg width="20" height="20"><path d="M9 2 3 15h12z" fill="none" stroke="#ddd" stroke-dasharray="4 1"/><circle cx="10" cy="10" r="3" fill="#69b04c"/><path d="M20 14v4h-4z" fill="#fff"/></svg>
            <svg width="20" height="20"><path d="M3 2h10v10H3z" fill="#eee"/><path d="m11 10-6-6M5 8V4h4" stroke="#222" fill="none" stroke-width="1.500"/><path d="M15 6v8H9" stroke="#eee" fill="none" stroke-width="2"/></svg>
        </div>
    </footer>

    <div class="taskbar">
        <button aria-label="Start"><svg width="18" height="18" fill="#fff"><path d="m1 3 7-1v6H1zM9 2l8-1v7H9zM1 9h7v7l-7-1zM9 9h8v8l-8-1z"/></svg></button>
        <button aria-label="Search"><svg width="18" height="18" fill="none" stroke="#fff" stroke-width="1.500"><circle cx="11" cy="6.500" r="5"/><path d="m7 10-6 7"/></svg></button>
        <button aria-label="Task View"><svg width="22" height="18" fill="none" stroke="#fff"><path d="M5.500 2.500h11v13h-11zM4 4.500H1.500v9H4M18 4.500h2.500v9H18"/></svg></button>
        <button class="open" aria-label="Explorer"><svg width="24" height="22"><path d="M2 3h8l2 2h10v14H2z" fill="#e9b948"/><path d="M2 8h20v11H2z" fill="#fbe08c"/><path d="M5 13h14v7h-3v-3H8v3H5z" fill="#3c9be0"/></svg></button>
        <button aria-label="Renderer"><svg width="24" height="24"><path d="M0 0h24v24H0z" fill="#555"/><path d="M12 0h12v24h-5q0-14-4-20z" fill="#999"/><path d="M2 24Q4 4 13 2q6 8 5 22-3-14-6-17-6 5-6 17z" fill="#111"/></svg></button>
        <button aria-label="Calculator"><svg width="20" height="24"><path d="M1 1h18v23H1z" fill="#fff"/><path d="M3 3h14v3H3z" fill="#111"/><path d="M4 10h13M4 15h13M4 20h13" stroke="#111" stroke-width="3" stroke-dasharray="3 2"/></svg></button>
        <button aria-label="Marvelous"><svg width="22" height="22"><path d="M0 0h22v22H0z" fill="#f7a91c"/><path d="M4 18V5l7 9 7-9v13" fill="none" stroke="#3a2408" stroke-width="2.500"/></svg></button>
        <button class="open" aria-label="Photoshop"><svg width="22" height="22"><path d="M1 1h20v20H1z" fill="#0a2231" stroke="#2fb4ee" stroke-width="2"/><text x="4" y="15" class="ps">Ps</text></svg></button>
        <button class="open front" aria-label="3ds Max"><svg width="26" height="26"><path d="M1 1h24v24H1z" fill="#b9eeee"/><path d="M1 14h24v11H1z" fill="#36b3b3"/><path d="m8 4 7-1 5 6-2 4 2 3-6 6-5-1 3-4-3-3 3-3z" fill="#0a7478"/></svg></button>
        <button class="open" aria-label="Yandex"><svg width="24" height="24"><circle cx="12" cy="12" r="11" fill="#fff"/><path d="m7 5 5 7 5-7M12 11v8" fill="none" stroke="#e01b22" stroke-width="3"/></svg></button>
        <div class="tray">
            <svg width="14" height="12"><path d="m2 9 5-5 5 5" fill="none" stroke="#fff" stroke-width="1.500"/></svg>
            <svg width="18" height="16" fill="none" stroke="#fff"><path d="M1.500 5.500H4l4-4v12l-4-4H1.500zM10 5q2 3 0 5M12 3q4 5 0 9M14 2q5 6 0 11"/></svg>
            <svg width="18" height="16" fill="none" stroke="#fff"><path d="M4.500 3.500h12v8h-12zM10 12v2M7 14.500h7M1.500 1.500h5v5h-5z"/></svg>
            <span>ENG</span>
            <time>15:13<br>03.12.2016</time>
            <svg width="18" height="18" fill="none" stroke="#fff"><path d="M1.500 2.500h15v11H12l-3 3v-3H1.500z"/></svg>
        </div>
    </div>
</body>

</html>
```
FILE: styles.css
```css
* {
    box-sizing: border-box;
}

body {
    display: flex;
    flex-direction: column;
    height: 100vh;
    margin: 0;
    overflow: hidden;
    background-color: #444;
    color: #dcdcdc;
    font-family: 'DejaVu Sans Condensed', 'DejaVu Sans', sans-serif;
    font-size: 11px;
    line-height: 13px;
}

button,
input,
select {
    font: inherit;
    color: inherit;
    margin: 0;
    padding: 0;
    border: 0;
    background: none;
    border-radius: 0;
}

svg {
    display: block;
    flex: none;
}

.defs {
    position: absolute;
}

/* the two small gradients draw the chevron */
select {
    appearance: none;
    background-color: #e1e1e1;
    color: #111;
    border: 1px solid #111;
    padding-left: 2px;
    background-image: linear-gradient(45deg, transparent 38%, #555 38% 62%, transparent 62%), linear-gradient(-45deg, transparent 38%, #555 38% 62%, transparent 62%);
    background-size: 5px 5px;
    background-position: right 8px center, right 4px center;
    background-repeat: no-repeat;
}

select:disabled {
    opacity: 1;
}

.sep {
    flex: none;
    width: 7px;
    height: 16px;
    border-right: 1px solid #111;
}

.flip {
    transform: scaleX(-1);
}

/* title + menu */
.top {
    display: flex;
    position: relative;
    height: 45px;
    flex: none;
    font-family: 'Open Sans', sans-serif;
}

.logo {
    position: absolute;
    left: 0;
    top: 0;
    width: 41px;
    height: 41px;
    background: linear-gradient(#bbb, #777);
    border: 1px solid #111;
    color: #111;
    font-size: 9px;
    line-height: 9px;
    padding: 0 3px 1px;
}

.logo svg {
    height: 29px;
}

.bars {
    flex: 1;
}

.titlebar {
    display: flex;
    height: 24px;
    background: linear-gradient(#aaa, #8b8b8b);
    color: #1a1a1a;
}

.quick {
    display: flex;
    align-items: center;
    padding-left: 50px;
    gap: 8px;
    width: 360px;
    flex: none;
}

.pale {
    fill: #eee;
    stroke: #333;
}

.dot {
    width: 4px;
    border: 2px solid transparent;
    border-top: 3px solid #333;
    height: 3px;
    flex: none;
}

.quick .dot {
    margin: 0 -2px;
}

.workspace {
    width: 130px;
    height: 21px;
    background-color: #d6d6d6;
    background-image: linear-gradient(45deg, transparent 50%, #444 50%), linear-gradient(-45deg, transparent 50%, #444 50%);
    background-size: 2px 2px;
    background-position: right 7px center, right 5px center;
    border-color: #666;
    padding-left: 4px;
    margin-left: 1px;
}

.more {
    margin-left: -8px;
}

.caption {
    flex: 1;
    background-color: #ff8c00;
    display: flex;
    align-items: center;
    justify-content: center;
    gap: 15px;
    color: #2b1a00;
    white-space: nowrap;
}

.search {
    display: flex;
    align-items: center;
    width: 457px;
    flex: none;
}

.search input {
    width: 181px;
    height: 22px;
    background-color: #fff;
    border: 1px solid #111;
    padding-left: 3px;
    font-style: italic;
}

.search input::placeholder {
    color: #555;
}

.signin {
    color: inherit;
    text-decoration: none;
    width: 85px;
    padding-left: 1px;
}

.exch {
    margin-left: 8px;
}

.help {
    font: bold 13px 'Open Sans', sans-serif;
    fill: #1c4fa0;
}

.winbtns {
    display: flex;
    width: 163px;
    flex: none;
    padding-left: 25px;
    background-color: #ff8c00;
}

.winbtns button {
    flex: 1;
    display: flex;
    align-items: center;
    justify-content: center;
}

.menubar {
    display: flex;
    align-items: center;
    height: 21px;
    gap: 25px;
    padding-left: 55px;
    background: linear-gradient(#8d8d8d, #4f4f4f);
}

.menubar a {
    color: #f2f2f2;
    text-decoration: none;
    white-space: nowrap;
}

/* main toolbar */
.toolbar {
    display: flex;
    align-items: center;
    flex: none;
    height: 39px;
    padding-left: 7px;
    overflow: hidden;
    border-top: 1px solid #333;
    border-bottom: 1px solid #222;
    background: linear-gradient(90deg, transparent 3px, #111 3px 4px, transparent 4px 6px, #111 6px 7px, transparent 7px);
    font-family: 'Open Sans', sans-serif;
}

.toolbar button {
    width: 32px;
    height: 30px;
    flex: none;
    display: flex;
    align-items: center;
    justify-content: center;
}

.toolbar .on {
    background-color: #3d80df;
    border: 1px solid #1a1a1a;
}

.toolbar select {
    flex: none;
    height: 20px;
    margin-bottom: 10px;
    padding-left: 0;
    border-width: 2px 1px 1px 2px;
}

.filter {
    width: 68px;
}

.toolbar .sets {
    width: 117px;
    background-color: #fff;
    background-image: linear-gradient(45deg, transparent 38%, #555 38% 62%, transparent 62%), linear-gradient(-45deg, transparent 38%, #555 38% 62%, transparent 62%), linear-gradient(#555, #555);
    background-size: 5px 5px, 5px 5px, 98px 20px;
    background-position: right 8px center, right 4px center, 0 0;
}

.snap {
    font: 13px 'Open Sans', sans-serif;
    fill: #fff;
}

.abc {
    font: bold 8px 'Liberation Sans', sans-serif;
    fill: #eee;
}

.tex {
    font: bold 9px 'Liberation Sans', sans-serif;
    fill: #222;
}

.red {
    fill: #c22;
}

.ribbon {
    display: flex;
    align-items: center;
    flex: none;
    height: 21px;
    padding-left: 14px;
    border-bottom: 1px solid #4b4728;
    background: linear-gradient(90deg, transparent 3px, #222 3px 4px, transparent 4px 6px, #222 6px 7px, transparent 7px), #525252;
    font-family: 'Open Sans', sans-serif;
    font-size: 12px;
}

.ribbon button {
    height: 18px;
    color: #a9a9a9;
    margin-right: 40px;
}

.ribbon .current {
    width: 81px;
    height: 18px;
    margin-right: 23px;
    align-self: flex-end;
    padding-left: 12px;
    color: #ccc;
    background-color: #666;
    border: 1px solid #2a2a2a;
    border-bottom: 0;
}

/* viewport */
.work {
    flex: 1;
    display: flex;
    min-height: 0;
}

.left {
    flex: 1;
    min-width: 0;
    display: flex;
    flex-direction: column;
}

.viewport {
    flex: 1;
    position: relative;
    overflow: hidden;
    border: 2px solid #70642e;
    background: linear-gradient(#333, #3c3c3c 40%, #4b4b4b);
}

.scene {
    position: absolute;
    left: 0;
    top: 0;
    width: 100%;
    height: 100%;
}

.axis {
    font: 10px 'DejaVu Sans', sans-serif;
}

.green {
    fill: #2f8f22;
}

.blue {
    fill: #2233aa;
}

.vlabel {
    position: absolute;
    left: 3px;
    top: 4px;
    color: #e6e6ee;
}

.cube {
    position: absolute;
    right: 15px;
    top: 13px;
    font: bold 11px 'DejaVu Sans Condensed', 'DejaVu Sans', sans-serif;
    fill: #aaa9cb;
    text-anchor: middle;
}

.cube .top-face {
    font-size: 7px;
    fill: #56547c;
}

.caddy {
    position: absolute;
    left: 454px;
    top: 348px;
    color: #f0dfe6;
}

.caddy-title {
    display: flex;
    gap: 4px;
    width: 108px;
    height: 34px;
    padding: 3px 8px;
    border-radius: 6px;
    background-color: #56213a;
    white-space: nowrap;
}

.caddy-title i {
    width: 3px;
    height: 18px;
    margin-top: 5px;
    flex: none;
    background-color: #85506a;
}

.pill {
    display: flex;
    align-items: center;
    width: 48px;
    height: 22px;
    margin: 7px 0;
    padding-left: 6px;
    border: 1px solid #6a3048;
    border-radius: 11px;
    background: linear-gradient(#ecc5d3, #d98fab);
}

.field {
    display: flex;
    align-items: center;
    width: 80px;
    height: 23px;
    padding-left: 8px;
    border: 2px solid #1e0c14;
    border-radius: 11px;
    background-color: #e9dce2;
    color: #222;
}

.field input {
    width: 7px;
    margin-left: 11px;
}

.caret {
    width: 1px;
    height: 12px;
    background-color: #111;
}

.rounds {
    display: flex;
    position: relative;
    gap: 7px;
    margin-top: 7px;
}

.rounds button {
    display: flex;
    align-items: center;
    justify-content: center;
    width: 22px;
    height: 22px;
    border: 1px solid #6a3048;
    border-radius: 50%;
    background-color: #e3a9bd;
}

.rounds b {
    position: absolute;
    left: 27px;
    top: -6px;
    color: #ffb52e;
}

/* time slider */
.slider {
    display: flex;
    height: 19px;
    flex: none;
}

.slider button {
    width: 16px;
    padding-top: 2px;
    border: 1px solid #1c1c1c;
    border-width: 0 1px 1px 0;
}

.slider .handle {
    width: 125px;
    border-width: 0 2px 2px 0;
}

.track {
    display: flex;
    height: 27px;
    flex: none;
    padding: 4px 54px 0 12px;
    border-top: 1px solid #111;
}

.ruler {
    flex: 1;
    margin: -4px 0 0 23px;
    background-color: #333;
}

.ticks {
    height: 12px;
    margin-bottom: 1px;
    background: repeating-linear-gradient(90deg, #777 0 1px, transparent 1px 1%);
    box-shadow: inset 5px 0 #8b8416;
}

.nums {
    display: flex;
    justify-content: space-between;
}

.nums span {
    width: 0;
    display: flex;
    justify-content: center;
}

.nums span:first-child {
    color: #d8d040;
}

/* command panel */
.side {
    width: 368px;
    flex: none;
    display: flex;
    flex-direction: column;
}

.side button,
.status button {
    white-space: nowrap;
    overflow: hidden;
}

.tabs {
    display: flex;
    flex: none;
    height: 27px;
    padding: 1px 2px 0;
    border-bottom: 1px solid #111;
}

.tabs button {
    display: flex;
    align-items: center;
    justify-content: center;
    width: 29px;
    border: 1px solid #111;
    border-radius: 4px 4px 0 0;
    background-color: #393939;
}

.tabs .current {
    background-color: #4a4a4a;
    border-color: #888 #111 #4a4a4a;
}

.cols {
    flex: 1;
    display: flex;
    min-height: 0;
}

.modify {
    position: relative;
    width: 186px;
    flex: none;
    padding-top: 6px;
    border-right: 1px solid #161616;
}

.namerow {
    display: flex;
    gap: 4px;
    margin: 0 7px 7px 12px;
}

.side input[type=text] {
    height: 18px;
    background-color: #555;
    border: 1px solid #222;
    border-width: 2px 1px 1px 2px;
    padding-left: 0;
    min-width: 0;
}

.namerow input {
    flex: 1;
}

.swatch {
    width: 17px;
    border: 1px solid #181850;
    background-color: #3431c4;
}

.modlist {
    display: block;
    width: 164px;
    height: 22px;
    margin: 0 0 10px 12px;
    padding-left: 0;
    color: #e6e6e6;
    background-color: #555;
    background-image: linear-gradient(45deg, transparent 38%, #555 38% 62%, transparent 62%), linear-gradient(-45deg, transparent 38%, #555 38% 62%, transparent 62%), linear-gradient(#fff, #fff);
    background-size: 5px 5px, 5px 5px, 17px 100%;
    background-position: right 8px center, right 4px center, right;
}

.modbtns {
    display: grid;
    grid-template-columns: 72px 72px;
    grid-auto-rows: 18px;
    gap: 5px 3px;
    margin-left: 17px;
}

.modbtns button,
.rb button {
    height: 18px;
    background-color: #464646;
    border: 1px solid #1c1c1c;
    border-width: 0 1px 1px 0;
    box-shadow: inset 1px 1px #4c4c4c;
}

.modbtns button {
    display: flex;
    justify-content: center;
    align-items: center;
}

.side button:disabled {
    color: #1a1a1a;
}

.stack {
    list-style: none;
    width: 161px;
    height: 126px;
    margin: 8px 0 0 11px;
    padding: 0;
    border: 1px solid #f2f2f2;
    background-color: #565656;
    font-weight: bold;
}

.stack li {
    display: flex;
    align-items: center;
    height: 16px;
    padding-left: 9px;
    border-bottom: 1px solid #888;
}

.stack .active {
    background-color: #3d80df;
}

.stack i {
    width: 9px;
    height: 9px;
    margin: 0 7px 0 8px;
    background-color: #001;
    color: #6bb0f0;
    font: 9px 'DejaVu Sans', sans-serif;
    line-height: 9px;
    text-align: center;
}

.stack .base {
    padding-left: 22px;
}

.mark-stack {
    position: absolute;
    left: 10px;
    top: 242px;
}

.stacktools {
    display: flex;
    align-items: center;
    height: 33px;
    padding-left: 12px;
    gap: 4px;
}

.stacktools .sep {
    width: 3px;
    margin-right: 3px;
}

.stacktools button {
    width: 23px;
    height: 24px;
    display: flex;
    align-items: center;
    justify-content: center;
}

.stacktools .pressed {
    border: 1px solid #222;
}

.rolls {
    border-top: 2px solid #111;
    margin: 5px 7px 0 4px;
    padding: 8px 3px 0 4px;
    position: relative;
}

.rolls::before {
    content: '';
    position: absolute;
    left: 0;
    right: 0;
    top: 7px;
    border-top: 1px solid #222;
}

.rolls .roll {
    margin-top: 4px;
}

.roll {
    border: 1px solid #202020;
    border-top: 0;
    padding: 0 2px 4px;
    margin-bottom: 8px;
}

.rolls .closed {
    border-bottom: 0;
    padding-bottom: 0;
    margin-bottom: 3px;
}

.rt {
    display: block;
    position: relative;
    width: 100%;
    height: 17px;
    border: 1px solid #686868;
    background-color: #3e3e3e;
}

.rt b {
    position: absolute;
    left: 5px;
    font-size: 13px;
}

.rb {
    display: flex;
    flex-direction: column;
    gap: 5px;
    padding: 5px 5px 0;
}

.rb label {
    display: flex;
    align-items: center;
    gap: 7px;
    white-space: nowrap;
}

.rb input[type=checkbox] {
    appearance: none;
    width: 12px;
    height: 12px;
    border: 1px solid #555;
    border-width: 2px 1px 1px 2px;
    border-color: #1c1c1c #555 #555 #1c1c1c;
    background-color: #505050;
}

.rb input[type=checkbox]:checked {
    background: linear-gradient(45deg, transparent 30%, #fff 30% 60%, transparent 60%) 1px 4px / 4px 4px no-repeat, linear-gradient(-45deg, transparent 35%, #fff 35% 65%, transparent 65%) 2px 1px / 7px 7px no-repeat, #333;
}

.rb input[type=radio] {
    appearance: none;
    width: 10px;
    height: 10px;
    border: 2px solid #222;
    border-color: #1c1c1c #555 #555 #1c1c1c;
    border-radius: 50%;
    background-color: #4a4a4a;
}

.rb input[type=radio]:checked {
    background-color: #f2f2f2;
}

.pair {
    display: grid;
    grid-template-columns: 1fr 1fr;
    gap: 5px;
}

.split {
    position: relative;
    display: flex;
    min-width: 0;
}

.split button {
    flex: 1;
}

.split .opt,
.opt {
    flex: none;
    width: 16px;
}

.rb .opt {
    background: linear-gradient(#444, #444) 4px 7px / 7px 5px no-repeat, linear-gradient(#000, #000) 3px 4px / 9px 9px no-repeat, #444;
    border-left: 1px solid #1c1c1c;
}

.mark-ext {
    position: absolute;
    left: 0;
    top: -3px;
}

.spin {
    border: 1px solid #222;
    border-width: 0 1px 1px 0;
}

.sel {
    height: 272px;
}

.sel .rb {
    padding-top: 2px;
}

.sel .rb > label {
    height: 14px;
    margin-left: 2px;
    gap: 5px;
}

.sub {
    display: flex;
    position: relative;
    align-items: center;
    height: 22px;
    padding-left: 15px;
    gap: 4px;
}

.sub button {
    width: 23px;
    height: 22px;
    border: 5px solid #fff200;
    background-color: #e81010;
    flex: none;
    box-shadow: none;
}

.sub button + svg {
    margin-left: -2px;
}

.mark-poly {
    position: absolute;
    left: 78px;
    top: -9px;
}

.angle {
    display: flex;
    align-items: center;
    gap: 3px;
    padding-left: 2px;
}

.angle label {
    gap: 5px;
}

.side .angle input[type=text] {
    width: 67px;
    height: 16px;
    color: #222;
}

.loops .split {
    gap: 6px;
}

.loops .split + .split {
    padding-right: 6px;
}

.preview {
    display: flex;
    height: 38px;
    gap: 16px;
    margin: 0 -5px;
    padding: 4px 0 0 3px;
    border: 1px solid #202020;
}

.rb legend {
    padding: 0 2px;
    margin-left: 3px;
    line-height: 11px;
}

.preview label {
    gap: 5px;
    height: 19px;
}

.count {
    margin: 4px 4px 0;
    text-align: right;
}

.params {
    width: 170px;
    flex: none;
    padding: 6px 1px 0 5px;
}

.params::after {
    content: '';
    display: block;
    margin-left: 3px;
    border-top: 1px solid #686868;
}

.constraints {
    display: grid;
    grid-template-columns: 60px 1fr;
    grid-auto-rows: 18px;
    height: 51px;
    margin: -2px -2px 0;
    padding: 1px 0 0 10px;
    border: 1px solid #202020;
}

.uvs {
    display: flex;
    align-items: center;
    gap: 8px;
    height: 18px;
    padding-left: 10px;
}

.uvs label {
    gap: 5px;
}

.slices {
    display: grid;
    grid-template-columns: 70px 69px;
    gap: 5px;
    margin: 0 -2px;
    padding: 4px 2px;
    border: 1px solid #202020;
}

.planar {
    display: grid;
    grid-template-columns: 1fr 17px 17px 17px;
    gap: 4px;
}

.rb .relax {
    width: 72px;
    margin-left: 38px;
}

.rb .unsel {
    width: 92px;
    margin-left: 28px;
}

.named {
    margin: 0;
    height: 9px;
    line-height: 9px;
}

.ids {
    display: grid;
    grid-template-columns: 70px 56px 11px;
    gap: 7px 4px;
    padding-top: 7px;
}

.side .ids input[type=text] {
    height: 17px;
}

.ids .setid {
    justify-content: flex-end;
    padding-right: 5px;
}

.matlist,
.wide {
    grid-column: 1 / -1;
}

.matlist {
    height: 19px;
    background-color: #ccc;
}

.scroll {
    flex: 1;
    display: flex;
    padding: 4px 0 8px 1px;
}

.scroll i {
    width: 4px;
    background: linear-gradient(#1a1a1a 63%, #c4c4c4 63%);
}

/* status */
.status {
    display: flex;
    flex: none;
    height: 50px;
    border-top: 1px solid #222;
}

.listener {
    width: 97px;
    margin: 1px 8px 1px 2px;
    flex: none;
    border: 1px solid #eee;
    background-color: #fff;
}

.listener div {
    height: 22px;
    background-color: #dfc0c3;
    border-bottom: 2px solid #888;
}

.listener input {
    width: 92px;
    padding-left: 4px;
    height: 22px;
    color: #111;
    font-family: 'Liberation Mono', monospace;
    font-size: 12px;
}

.info {
    flex: 1;
    min-width: 0;
    padding-top: 1px;
}

.line {
    display: flex;
    align-items: center;
    height: 25px;
}

.msg,
.prompt {
    flex: 1;
    height: 21px;
    line-height: 21px;
    padding-left: 5px;
    border: 1px solid #222;
    border-width: 1px 0 0 1px;
    white-space: nowrap;
}

.line label {
    display: flex;
    align-items: center;
    white-space: nowrap;
    gap: 2px;
    padding-left: 3px;
}

.line input {
    width: 56px;
    height: 18px;
    padding-left: 1px;
    background-color: #555;
    border: 1px solid #222;
    border-width: 2px 1px 1px 2px;
}

.grid {
    width: 101px;
    height: 21px;
    line-height: 21px;
    padding-left: 5px;
    margin-left: 3px;
    flex: none;
    border: 1px solid #222;
    border-width: 1px 1px 0 1px;
    white-space: nowrap;
}

.degrade {
    display: flex;
    align-items: center;
    justify-content: center;
    width: 22px;
    height: 20px;
    background-color: #3d80df;
    border: 1px solid #111;
}

.bigkey {
    width: 44px;
    margin: 2px 3px;
    flex: none;
    display: flex;
    align-items: center;
    justify-content: center;
    border: 1px solid #222;
}

.keys {
    width: 48px;
    flex: none;
    padding-top: 1px;
}

.keys button {
    display: block;
    width: 47px;
    height: 22px;
    margin-top: 1px;
    border: 1px solid #222;
    border-width: 0 1px 1px 0;
}

.filters {
    width: 115px;
    margin-left: 3px;
    flex: none;
}

.filters select {
    width: 114px;
    height: 19px;
    margin: 3px 0 4px;
    padding-left: 0;
}

.filters div {
    display: flex;
    gap: 2px;
}

.filters button {
    flex: 1;
    height: 19px;
    border: 1px solid #222;
    border-width: 0 1px 1px 0;
}

.play {
    width: 128px;
    flex: none;
    padding-left: 2px;
}

.play .line input {
    width: 65px;
    margin-left: 3px;
}

.play .line:last-child {
    height: 21px;
}

.nav {
    display: grid;
    grid-template-columns: 18px repeat(4, 23px);
    gap: 2px 0;
    padding-top: 3px;
    width: 114px;
    flex: none;
    margin-left: -16px;
}

.nav svg:first-child {
    grid-column: 2;
}

/* taskbar */
.taskbar {
    display: flex;
    flex: none;
    height: 40px;
    background-color: #0c0c0c;
    color: #fff;
    font-family: 'Open Sans', sans-serif;
    font-size: 12px;
}

.taskbar button {
    width: 49px;
    display: flex;
    align-items: center;
    justify-content: center;
    border-bottom: 2px solid transparent;
}

.taskbar .open {
    background: linear-gradient(#e8a56a, #e8a56a) center 38px / 40px 2px no-repeat;
    background-origin: border-box;
}

.taskbar .front {
    background-color: #3c3c3c;
}

.ps {
    font: bold 11px 'Open Sans', sans-serif;
    fill: #2fb4ee;
}

.tray {
    display: flex;
    align-items: center;
    gap: 7px;
    margin-left: auto;
    padding-right: 24px;
}

.tray time {
    text-align: center;
    line-height: 18px;
    font-size: 11px;
    margin: 0 9px 0 6px;
}
```
